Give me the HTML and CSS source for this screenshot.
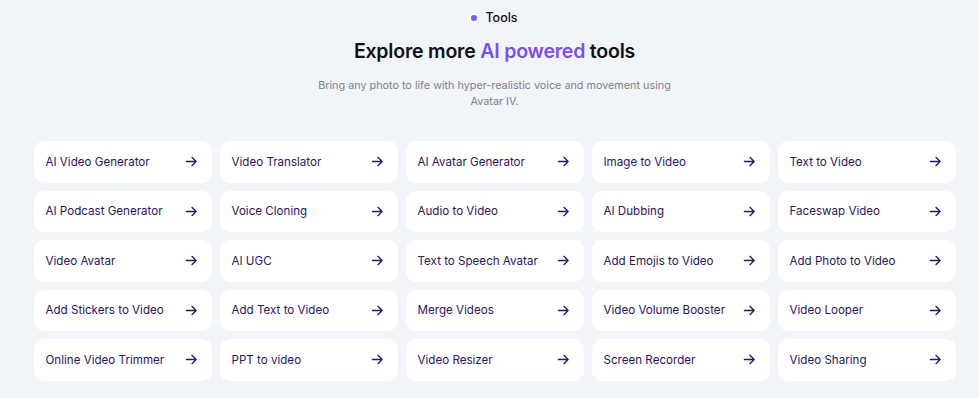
FILE: index.html
```html
<!doctype html>
<html lang="en">
<head>
  <meta charset="utf-8">
  <title>Tools</title>
  <link rel="stylesheet" href="styles.css">
</head>
<body>

<section class="tools">
  <div class="tag"><span class="dot"></span>Tools</div>
  <h2 class="title">Explore more <span class="hl">AI powered</span> tools</h2>
  <p class="sub">Bring any photo to life with hyper-realistic voice and movement using Avatar IV.</p>

  <div class="grid">
    <a class="card">AI Video Generator<svg viewBox="0 0 14 14"><path d="M1.5 7h10.5M7.5 2.5L12 7l-4.5 4.5"/></svg></a>
    <a class="card">Video Translator<svg viewBox="0 0 14 14"><path d="M1.5 7h10.5M7.5 2.5L12 7l-4.5 4.5"/></svg></a>
    <a class="card">AI Avatar Generator<svg viewBox="0 0 14 14"><path d="M1.5 7h10.5M7.5 2.5L12 7l-4.5 4.5"/></svg></a>
    <a class="card">Image to Video<svg viewBox="0 0 14 14"><path d="M1.5 7h10.5M7.5 2.5L12 7l-4.5 4.5"/></svg></a>
    <a class="card">Text to Video<svg viewBox="0 0 14 14"><path d="M1.5 7h10.5M7.5 2.5L12 7l-4.5 4.5"/></svg></a>

    <a class="card">AI Podcast Generator<svg viewBox="0 0 14 14"><path d="M1.5 7h10.5M7.5 2.5L12 7l-4.5 4.5"/></svg></a>
    <a class="card">Voice Cloning<svg viewBox="0 0 14 14"><path d="M1.5 7h10.5M7.5 2.5L12 7l-4.5 4.5"/></svg></a>
    <a class="card">Audio to Video<svg viewBox="0 0 14 14"><path d="M1.5 7h10.5M7.5 2.5L12 7l-4.5 4.5"/></svg></a>
    <a class="card">AI Dubbing<svg viewBox="0 0 14 14"><path d="M1.5 7h10.5M7.5 2.5L12 7l-4.5 4.5"/></svg></a>
    <a class="card">Faceswap Video<svg viewBox="0 0 14 14"><path d="M1.5 7h10.5M7.5 2.5L12 7l-4.5 4.5"/></svg></a>

    <a class="card">Video Avatar<svg viewBox="0 0 14 14"><path d="M1.5 7h10.5M7.5 2.5L12 7l-4.5 4.5"/></svg></a>
    <a class="card">AI UGC<svg viewBox="0 0 14 14"><path d="M1.5 7h10.5M7.5 2.5L12 7l-4.5 4.5"/></svg></a>
    <a class="card">Text to Speech Avatar<svg viewBox="0 0 14 14"><path d="M1.5 7h10.5M7.5 2.5L12 7l-4.5 4.5"/></svg></a>
    <a class="card">Add Emojis to Video<svg viewBox="0 0 14 14"><path d="M1.5 7h10.5M7.5 2.5L12 7l-4.5 4.5"/></svg></a>
    <a class="card">Add Photo to Video<svg viewBox="0 0 14 14"><path d="M1.5 7h10.5M7.5 2.5L12 7l-4.5 4.5"/></svg></a>

    <a class="card">Add Stickers to Video<svg viewBox="0 0 14 14"><path d="M1.5 7h10.5M7.5 2.5L12 7l-4.5 4.5"/></svg></a>
    <a class="card">Add Text to Video<svg viewBox="0 0 14 14"><path d="M1.5 7h10.5M7.5 2.5L12 7l-4.5 4.5"/></svg></a>
    <a class="card">Merge Videos<svg viewBox="0 0 14 14"><path d="M1.5 7h10.5M7.5 2.5L12 7l-4.5 4.5"/></svg></a>
    <a class="card">Video Volume Booster<svg viewBox="0 0 14 14"><path d="M1.5 7h10.5M7.5 2.5L12 7l-4.5 4.5"/></svg></a>
    <a class="card">Video Looper<svg viewBox="0 0 14 14"><path d="M1.5 7h10.5M7.5 2.5L12 7l-4.5 4.5"/></svg></a>

    <a class="card">Online Video Trimmer<svg viewBox="0 0 14 14"><path d="M1.5 7h10.5M7.5 2.5L12 7l-4.5 4.5"/></svg></a>
    <a class="card">PPT to video<svg viewBox="0 0 14 14"><path d="M1.5 7h10.5M7.5 2.5L12 7l-4.5 4.5"/></svg></a>
    <a class="card">Video Resizer<svg viewBox="0 0 14 14"><path d="M1.5 7h10.5M7.5 2.5L12 7l-4.5 4.5"/></svg></a>
    <a class="card">Screen Recorder<svg viewBox="0 0 14 14"><path d="M1.5 7h10.5M7.5 2.5L12 7l-4.5 4.5"/></svg></a>
    <a class="card">Video Sharing<svg viewBox="0 0 14 14"><path d="M1.5 7h10.5M7.5 2.5L12 7l-4.5 4.5"/></svg></a>
  </div>
</section>

</body>
</html>
```

FILE: styles.css
```css
html, body { margin: 0; background: #f1f4f8; }
body { font-family: Inter, "Noto Sans", sans-serif; color: #101014; }

.tools {
  width: 922px;
  margin: 0 0 0 33.5px;
  padding-top: 9px;
  display: flex;
  flex-direction: column;
  align-items: center;
}

.tag {
  display: flex;
  align-items: center;
  gap: 8px;
  font-size: 12.5px;
  font-weight: 500;
  line-height: 18px;
}
.dot { width: 6px; height: 6px; border-radius: 50%; background: #7b5cf5; }

.title {
  margin: 11px 0 0;
  font-size: 19.5px;
  font-weight: 600;
  line-height: 26px;
  letter-spacing: -0.2px;
}
.hl { color: #7a4ff5; }

.sub {
  margin: 14px 0 0;
  width: 370px;
  text-align: center;
  font-size: 10.8px;
  line-height: 16px;
  color: #7e828b;
}

.grid {
  margin-top: 31px;
  width: 100%;
  display: grid;
  grid-template-columns: repeat(5, 1fr);
  grid-auto-rows: 41.5px;
  gap: 8px;
}

.card {
  background: #fff;
  border-radius: 10px;
  display: flex;
  align-items: center;
  justify-content: space-between;
  padding: 0 14px 0 12px;
  font-size: 11.6px;
  color: #2b165f;
  cursor: pointer;
}
.card svg {
  width: 13px;
  height: 13px;
  fill: none;
  stroke: #2b165f;
  stroke-width: 1.4;
  stroke-linecap: round;
  stroke-linejoin: round;
}
```
